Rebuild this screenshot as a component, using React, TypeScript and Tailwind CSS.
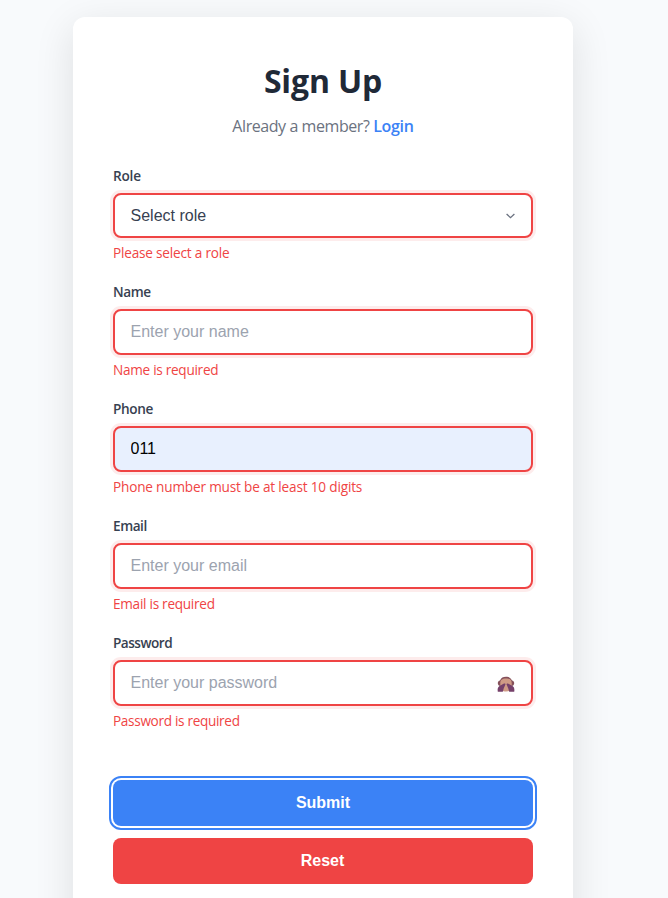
import type { ReactNode } from "react";

const inputBase =
  "block w-full rounded-lg border-2 border-[#ef4444] px-[15.5px] font-['Liberation_Sans',Arial,sans-serif] text-base outline-none shadow-[0_0_0_3px_rgba(239,68,68,0.1)] placeholder:text-[#9ca3af]";

function Field({ label, labelClass, error, errorClass, children }: { label: string; labelClass: string; error: string; errorClass: string; children: ReactNode }) {
  return (
    <div className="mb-[19px]">
      <label className="mb-[7px] block h-5 text-[13.6px] leading-5 font-semibold text-[#374151]">
        <span className={labelClass}>{label}</span>
      </label>
      {children}
      <p className="mt-[5px] h-5 text-[13.6px] leading-5 text-[#ef4444]">
        <span className={errorClass}>{error}</span>
      </p>
    </div>
  );
}

function Monkey() {
  return (
    <svg width="18" height="17" viewBox="0 0 18 17" aria-hidden="true">
      <path d="M3 4.500C4.200 1.800 6 .8 9 .8s4.800 1 6 3.700c1.500.2 2.200 1.300 2.200 2.700S16 10 14.800 10H3.200C2 10 .8 8.600 .8 7.200S1.500 4.700 3 4.500z" fill="#85505a" />
      <path d="M3.300 7C3.300 4 5 2.400 9 2.400S14.700 4 14.700 7v4.500c0 2.600-2.400 4-5.700 4s-5.700-1.400-5.700-4z" fill="#cf9a85" />
      <path d="M.8 15.800C.3 13 .8 11 2.500 10L7 7.600c1.100-.5 1.900.2 1.300 1.200L6.700 12.500l-.9 3.300z" fill="#75406a" />
      <path d="M17.200 15.800c.5-2.800 0-4.800-1.700-5.800L11 7.600c-1.100-.5-1.900.2-1.300 1.200l1.600 3.700.9 3.300z" fill="#75406a" />
    </svg>
  );
}

export default function App() {
  return (
    <main className="h-[898px] overflow-hidden bg-[#f8fafc] pt-[17px] pl-[73px] font-['Open_Sans','Noto_Sans',sans-serif]">
      <div className="h-[921px] w-[500px] rounded-xl bg-white px-10 pt-10 shadow-[0_10px_40px_rgba(0,0,0,0.11)]">
        <h1 className="h-12 text-center text-[32px] leading-[48px] font-bold tracking-[-0.15px] text-[#1f2937]">Sign Up</h1>
        <p className="mt-[9px] mb-7 h-6 text-center text-base leading-6 whitespace-nowrap text-[#6b7280]">
          <span className="tracking-[-0.43px]">Already a member? </span>
          <a href="#" className="font-semibold tracking-[-0.3px] text-[#3b82f6]">Login</a>
        </p>
        <form noValidate>
          <Field label="Role" labelClass="tracking-[-0.2px]" error="Please select a role" errorClass="tracking-[-0.2px]">
            <button type="button" className={`${inputBase} flex! h-[45px] items-center justify-between bg-white text-left text-[#374151]`}>
              Select role
              <svg className="mr-[0.5px]" width="9" height="6" viewBox="0 0 9 6" fill="none" stroke="#6b7280" strokeWidth="1.3">
                <path d="M.6 1l3.900 3.700L8.400 1" />
              </svg>
            </button>
          </Field>
          <Field label="Name" labelClass="tracking-[-0.4px]" error="Name is required" errorClass="tracking-[-0.28px]">
            <input className={`${inputBase} h-[46px] bg-white`} placeholder="Enter your name" />
          </Field>
          <Field label="Phone" labelClass="tracking-[-0.35px]" error="Phone number must be at least 10 digits" errorClass="tracking-[-0.18px]">
            <input className={`${inputBase} h-[46px] bg-[#e8f0fe] text-black`} defaultValue="011" />
          </Field>
          <Field label="Email" labelClass="tracking-[-0.45px]" error="Email is required" errorClass="tracking-[-0.27px]">
            <input className={`${inputBase} h-[46px] bg-white`} placeholder="Enter your email" />
          </Field>
          <Field label="Password" labelClass="tracking-[-0.5px]" error="Password is required" errorClass="tracking-[-0.32px]">
            <div className="relative">
              <input type="password" className={`${inputBase} h-[46px] bg-white`} placeholder="Enter your password" />
              <button type="button" aria-label="Show password" className="absolute top-4 right-[18.5px]">
                <Monkey />
              </button>
            </div>
          </Field>
          <div className="mt-[49px] flex flex-col gap-3 font-['Liberation_Sans',Arial,sans-serif] text-base font-bold text-white">
            <button type="submit" className="h-[46px] rounded-lg bg-[#3b82f6] outline-2 outline-offset-2 outline-[#3b82f6]">Submit</button>
            <button type="button" className="h-[46px] rounded-lg bg-[#ef4444] pr-px">Reset</button>
          </div>
        </form>
      </div>
    </main>
  );
}
